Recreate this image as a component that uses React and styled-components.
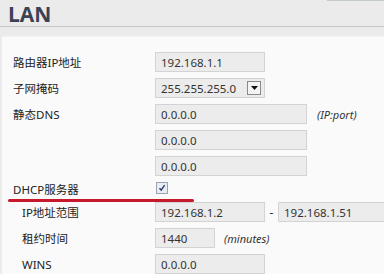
import React from "react";
import styled, { createGlobalStyle } from "styled-components";

const Global = createGlobalStyle`
  html, body { margin: 0; padding: 0; background: #ebebeb; overflow: hidden; }
  body { font-family: "Noto Sans", "Noto Sans CJK SC", sans-serif; }
`;

const Page = styled.div`
  width: 384px;
  height: 274px;
  background: #ebebeb;
  display: flex;
  flex-direction: column;
  overflow: hidden;
  position: relative;
`;

const TopEdge = styled.div`
  position: absolute;
  top: 0;
  left: 327px;
  right: 0;
  height: 1px;
  background: #c4cbcb;
`;

const Header = styled.div`
  height: 30px;
  border-bottom: 1px solid #c6c6c6;
  display: flex;
  align-items: flex-start;
  padding: 2px 0 0 8px;
  box-sizing: border-box;
`;

const Title = styled.h1`
  margin: 0;
  font-family: "Open Sans", "Noto Sans", sans-serif;
  font-size: 21px;
  font-weight: 700;
  color: #3b4256;
  line-height: 24px;
`;

const Panel = styled.div`
  margin-top: 9px;
  margin-left: 2px;
  flex: 1;
  background: #fafafa;
  border-top: 1px solid #f3f3f3;
  padding-top: 12px;
  display: flex;
  flex-direction: column;
`;

const Row = styled.div`
  display: flex;
  align-items: center;
  height: ${(p) => p.$h || 26}px;
  position: relative;
`;

const Label = styled.div`
  width: ${(p) => (p.$sub ? 133 : 142)}px;
  padding-left: ${(p) => (p.$sub ? 20 : 11)}px;
  font-size: 11.5px;
  color: #222;
  flex-shrink: 0;
`;

const Input = styled.div`
  width: ${(p) => p.$w}px;
  height: 20px;
  box-sizing: border-box;
  background: #ececec;
  border: 1px solid #d3d3d3;
  font-size: 11.5px;
  color: #333;
  display: flex;
  align-items: center;
  padding-left: 5px;
  flex-shrink: 0;
`;

const SelectBox = styled(Input)`
  justify-content: space-between;
  padding-right: 3px;
`;

const DropBtn = styled.div`
  width: 14px;
  height: 14px;
  box-sizing: border-box;
  border: 1px solid #8a8a8a;
  background: #f4f4f4;
  display: flex;
  align-items: center;
  justify-content: center;
`;

const Hint = styled.span`
  font-style: italic;
  font-size: 11px;
  color: #333;
  margin-left: ${(p) => p.$ml}px;
`;

const Dash = styled.span`
  font-size: 12px;
  color: #333;
  width: 13px;
  text-align: center;
  flex-shrink: 0;
`;

const Check = styled.div`
  width: 12px;
  height: 12px;
  box-sizing: border-box;
  border: 1px solid #9aa3b0;
  background: #e9eef5;
  display: flex;
  align-items: center;
  justify-content: center;
  margin-left: 1px;
  margin-top: -3px;
`;

const RedMark = styled.div`
  position: absolute;
  left: 6px;
  width: 186px;
  bottom: -3px;
  height: 3px;
  border-radius: 2px;
  background: #c8182b;
`;

export default function App() {
  return (
    <Page>
      <Global />
      <TopEdge />
      <Header>
        <Title>LAN</Title>
      </Header>
      <Panel>
        <Row>
          <Label>路由器IP地址</Label>
          <Input $w={110}>192.168.1.1</Input>
        </Row>
        <Row>
          <Label>子网掩码</Label>
          <SelectBox $w={110}>
            255.255.255.0
            <DropBtn>
              <svg width="7" height="4" viewBox="0 0 7 4">
                <path d="M0 0H7L3.5 4Z" fill="#111" />
              </svg>
            </DropBtn>
          </SelectBox>
        </Row>
        <Row>
          <Label>静态DNS</Label>
          <Input $w={152}>0.0.0.0</Input>
          <Hint $ml={10}>(IP:port)</Hint>
        </Row>
        <Row>
          <Label />
          <Input $w={152}>0.0.0.0</Input>
        </Row>
        <Row>
          <Label />
          <Input $w={152}>0.0.0.0</Input>
        </Row>
        <Row $h={20}>
          <Label>DHCP服务器</Label>
          <Check>
            <svg width="8" height="8" viewBox="0 0 8 8">
              <path d="M1.5 4.2L3.2 6.2L6.6 1.2" stroke="#2a3a66" strokeWidth="1.4" fill="none" />
            </svg>
          </Check>
          <RedMark />
        </Row>
        <Row>
          <Label $sub>IP地址范围</Label>
          <Input $w={110}>192.168.1.2</Input>
          <Dash>-</Dash>
          <Input $w={110}>192.168.1.51</Input>
        </Row>
        <Row>
          <Label $sub>租约时间</Label>
          <Input $w={60}>1440</Input>
          <Hint $ml={9}>(minutes)</Hint>
        </Row>
        <Row>
          <Label $sub>WINS</Label>
          <Input $w={110}>0.0.0.0</Input>
        </Row>
      </Panel>
    </Page>
  );
}
